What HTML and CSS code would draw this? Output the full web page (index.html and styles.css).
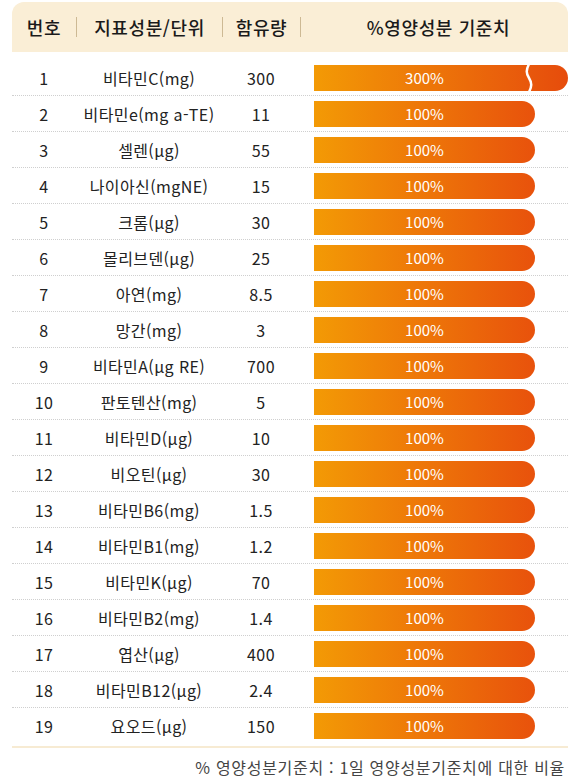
FILE: index.html
```html
<!DOCTYPE html>
<html lang="ko">
<head>
    <meta charset="UTF-8">
    <title>영양성분 기준치</title>
    <link rel="stylesheet" href="styles.css">
</head>
<body>
    <div class="table">
        <div class="head">
            <div class="cell num">번호</div>
            <div class="cell name">지표성분/단위</div>
            <div class="cell amount">함유량</div>
            <div class="cell pct">%영양성분 기준치</div>
        </div>

        <div class="rows" id="rows"></div>

        <p class="note">% 영양성분기준치 : 1일 영양성분기준치에 대한 비율</p>
    </div>

    <script>
        const items = [
            ['비타민C(mg)', '300', 300],
            ['비타민e(mg a-TE)', '11', 100],
            ['셀렌(μg)', '55', 100],
            ['나이아신(mgNE)', '15', 100],
            ['크롬(μg)', '30', 100],
            ['몰리브덴(μg)', '25', 100],
            ['아연(mg)', '8.5', 100],
            ['망간(mg)', '3', 100],
            ['비타민A(μg RE)', '700', 100],
            ['판토텐산(mg)', '5', 100],
            ['비타민D(μg)', '10', 100],
            ['비오틴(μg)', '30', 100],
            ['비타민B6(mg)', '1.5', 100],
            ['비타민B1(mg)', '1.2', 100],
            ['비타민K(μg)', '70', 100],
            ['비타민B2(mg)', '1.4', 100],
            ['엽산(μg)', '400', 100],
            ['비타민B12(μg)', '2.4', 100],
            ['요오드(μg)', '150', 100]
        ];

        const rows = document.getElementById('rows');
        items.forEach(function(item, i) {
            const row = document.createElement('div');
            row.className = 'row';
            const over = item[2] > 100;
            row.innerHTML =
                '<div class="cell num">' + (i + 1) + '</div>' +
                '<div class="cell name">' + item[0] + '</div>' +
                '<div class="cell amount">' + item[1] + '</div>' +
                '<div class="cell pct"><div class="bar' + (over ? ' over' : '') + '">' +
                '<span>' + item[2] + '%</span>' +
                (over ? '<svg class="cut" viewBox="0 0 8 28"><path d="M4 0 C1 6 1 9 4 14 C7 19 7 22 4 28" /></svg>' : '') +
                '</div></div>';
            rows.appendChild(row);
        });
    </script>
</body>
</html>
```

FILE: styles.css
```css
body {
    margin: 0;
    padding: 2px 12px 0;
    background: #fff;
    font-family: "Noto Sans CJK KR", "Noto Sans", sans-serif;
    color: #222;
}
.table {
    width: 556px;
}
.head,
.row {
    display: grid;
    grid-template-columns: 64px 146px 78px 268px;
    align-items: center;
}
.head {
    height: 50px;
    background-color: #faeed6;
    border-radius: 12px 12px 0 0;
    font-size: 18px;
    font-weight: 500;
    letter-spacing: 0.6px;
    color: #1a1a1a;
    margin-bottom: 8px;
}
.head .cell {
    height: 20px;
    line-height: 20px;
    text-align: center;
}
.head .cell + .cell {
    border-left: 1px solid #cdb994;
}
.head .pct {
    padding-left: 8px;
}
.rows {
    border-bottom: 2px solid #f7ebd3;
    padding-bottom: 3px;
}
.row {
    height: 35px;
    border-bottom: 1px dotted #cfcfcf;
    font-size: 16px;
    letter-spacing: 0.4px;
}
.row:last-child {
    border-bottom: none;
}
.row .cell {
    text-align: center;
}
.row .pct {
    padding-left: 14px;
}
.bar {
    position: relative;
    width: 221px;
    height: 26px;
    border-radius: 0 13px 13px 0;
    background: linear-gradient(to right, #f39a05, #e8520c);
    color: #fff;
    font-size: 15px;
    letter-spacing: 0;
    line-height: 26px;
    text-align: center;
}
.bar.over {
    width: 254px;
    background: linear-gradient(to right, #f39a05 0%, #e8580c 84%, #e64c0c 100%);
}
.bar.over span {
    display: block;
    width: 221px;
}
.cut {
    position: absolute;
    left: 211px;
    top: -1px;
    width: 8px;
    height: 28px;
    fill: none;
    stroke: #fff;
    stroke-width: 2.5px;
}
.note {
    margin: 7px 3px 0 0;
    text-align: right;
    font-size: 16px;
    letter-spacing: 0.7px;
    color: #444;
}
```
